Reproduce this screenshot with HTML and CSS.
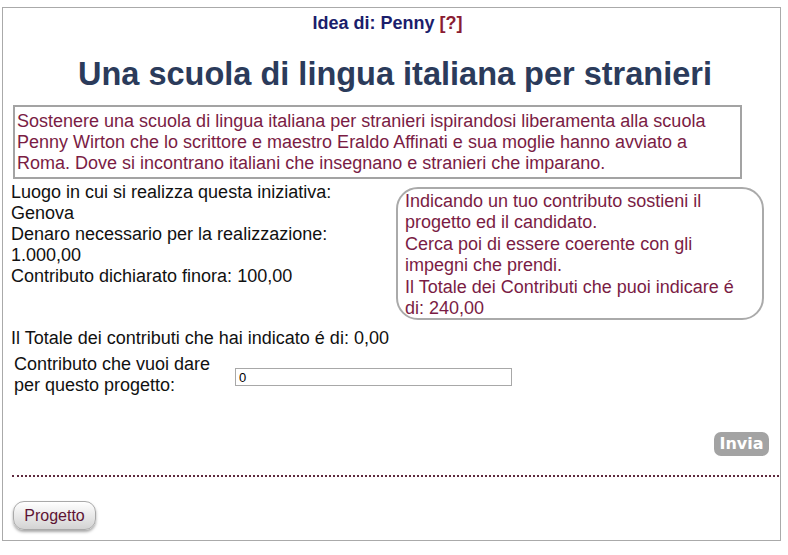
FILE: index.html
```html
<!DOCTYPE html>
<html lang="it">
<head>
<meta charset="utf-8">
<title>Una scuola di lingua italiana per stranieri</title>
<link rel="stylesheet" href="styles.css">
</head>
<body>
<div class="page">
  <div class="author">Idea di: Penny <span class="help">[?]</span></div>
  <h1 class="title">Una scuola di lingua italiana per stranieri</h1>
  <div class="desc">Sostenere una scuola di lingua italiana per stranieri ispirandosi liberamenta alla scuola Penny Wirton che lo scrittore e maestro Eraldo Affinati e sua moglie hanno avviato a Roma. Dove si incontrano italiani che insegnano e stranieri che imparano.</div>
  <div class="info-row">
    <div class="info">
      <div>Luogo in cui si realizza questa iniziativa:</div>
      <div>Genova</div>
      <div>Denaro necessario per la realizzazione:</div>
      <div>1.000,00</div>
      <div>Contributo dichiarato finora: 100,00</div>
    </div>
    <div class="note">Indicando un tuo contributo sostieni il progetto ed il candidato.<br>Cerca poi di essere coerente con gli impegni che prendi.<br>Il Totale dei Contributi che puoi indicare é di: 240,00</div>
  </div>
  <div class="total">Il Totale dei contributi che hai indicato é di: 0,00</div>
  <div class="form-row">
    <label class="form-label" for="contrib">Contributo che vuoi dare per questo progetto:</label>
    <input class="form-input" id="contrib" type="text" value="0">
  </div>
  <div class="actions">
    <button class="send" type="button">Invia</button>
  </div>
  <div class="divider"></div>
  <button class="project" type="button">Progetto</button>
</div>
</body>
</html>
```

FILE: styles.css
```css
html, body {
  margin: 0;
  padding: 0;
  background: #ffffff;
}

.page {
  margin: 7px 0 0 2px;
  width: 777px;
  height: 532px;
  border: 1px solid #aaaaaa;
  font-family: "Liberation Sans", Arial, sans-serif;
  font-size: 18px;
  color: #111111;
  box-sizing: content-box;
}

.author {
  padding-top: 5px;
  text-align: center;
  font-weight: bold;
  font-size: 18px;
  color: #1b1e6c;
  margin-left: -8px;
}

.help {
  color: #8a1c32;
}

.title {
  margin: 22px 0 0 0;
  text-align: center;
  font-size: 32.5px;
  font-weight: bold;
  color: #2b3b5b;
  line-height: 37px;
  padding-left: 7px;
}

.desc {
  margin: 12px 0 0 10px;
  width: 721px;
  border: 2px solid #a3a3a3;
  padding: 4px 2px 3px 2px;
  color: #7a1c44;
}

.info-row {
  display: flex;
  justify-content: space-between;
  align-items: flex-start;
  margin-top: 3px;
  padding: 0 16px 0 8px;
}

.info {
  line-height: 21px;
}

.note {
  margin-top: 5px;
  width: 339px;
  height: 127px;
  border: 2px solid #aaaaaa;
  border-radius: 22px;
  padding: 2px 18px 0 7px;
  color: #7a1c44;
  line-height: 21.4px;
}

.total {
  margin: 8px 0 0 8px;
  line-height: 21px;
}

.form-row {
  display: flex;
  align-items: center;
  margin-top: 5px;
  padding-left: 11px;
}

.form-label {
  width: 211px;
  line-height: 21px;
}

.form-input {
  margin: 4px 0 0 10px;
  width: 277px;
  height: 18px;
  box-sizing: border-box;
  border: 1px solid #a8a8a8;
  padding: 0 3px;
  font-family: "Liberation Sans", Arial, sans-serif;
  font-size: 13px;
  color: #000000;
}

.actions {
  display: flex;
  justify-content: flex-end;
  margin-top: 36px;
  padding-right: 11px;
}

.send {
  width: 55px;
  height: 24px;
  border: none;
  border-radius: 7px;
  background: #a3a3a3;
  color: #ffffff;
  font-family: "DejaVu Sans", sans-serif;
  font-weight: bold;
  font-size: 16px;
  padding: 0;
  line-height: 24px;
}

.divider {
  margin: 19px 1px 0 9px;
  border-top: 2px dotted #5e2a3e;
}

.project {
  display: block;
  margin: 24px 0 0 10px;
  width: 83px;
  height: 29px;
  border: 1px solid #a9a9a9;
  border-radius: 11px;
  background: linear-gradient(#ffffff, #d3d3d3);
  box-shadow: 0 2px 3px rgba(0, 0, 0, 0.35);
  color: #5e1434;
  font-family: "Liberation Sans", Arial, sans-serif;
  font-size: 16px;
  padding: 0;
}
```
